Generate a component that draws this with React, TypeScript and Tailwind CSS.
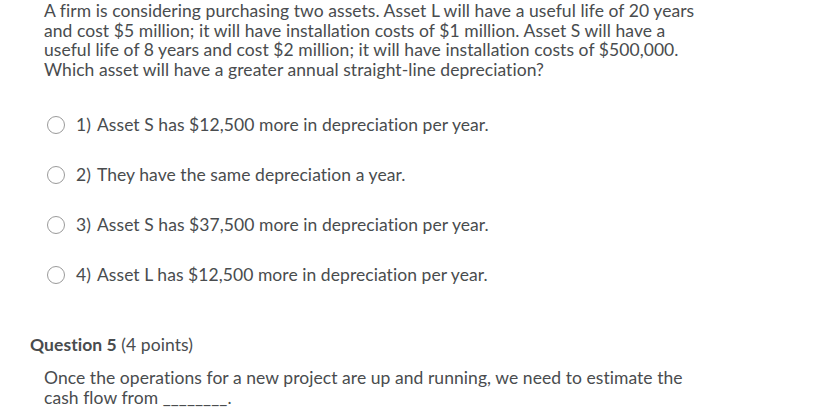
import React from "react";

const options: [string, string][] = [
  ["1)", "Asset S has $12,500 more in depreciation per year."],
  ["2)", "They have the same depreciation a year."],
  ["3)", "Asset S has $37,500 more in depreciation per year."],
  ["4)", "Asset L has $12,500 more in depreciation per year."],
];

export default function App() {
  return (
    <div
      className="w-[813px] h-[416px] bg-white text-[#494c4e] overflow-hidden [font-variant-ligatures:none] tracking-[0.06px]"
      style={{ fontFamily: "Lato, 'Open Sans', sans-serif" }}
    >
      <div className="pl-[44px] pt-[1px] pr-4">
        <p className="text-[17.5px] leading-[19.5px] w-[664px]">
          A firm is considering purchasing two assets. Asset L will have a useful life of 20 years and cost $5 million; it will have installation costs of $1 million. Asset S will have a useful life of 8 years and cost $2 million; it will have installation costs of $500,000. Which asset will have a greater annual straight-line depreciation?
        </p>
        <div className="mt-[21px] flex flex-col">
          {options.map(([n, o]) => (
            <div key={n} className="h-[50px] flex items-center">
              <span className="ml-[3px] w-[18px] h-[18px] rounded-full border border-[#9a9a9a] bg-white shrink-0" />
              <span className="ml-[11px] text-[17.5px]">{n}</span>
              <span className="ml-[6px] text-[17.5px]">{o}</span>
            </div>
          ))}
        </div>
      </div>
      <div className="pl-[30px] mt-[35px]">
        <h2 className="text-[17.5px] leading-[20px]">
          <span className="font-bold">Question 5</span> (4 points)
        </h2>
      </div>
      <p className="pl-[44px] mt-[13px] text-[17.5px] leading-[19.5px] w-[708px]">
        Once the operations for a new project are up and running, we need to estimate the cash flow from ________.
      </p>
    </div>
  );
}
